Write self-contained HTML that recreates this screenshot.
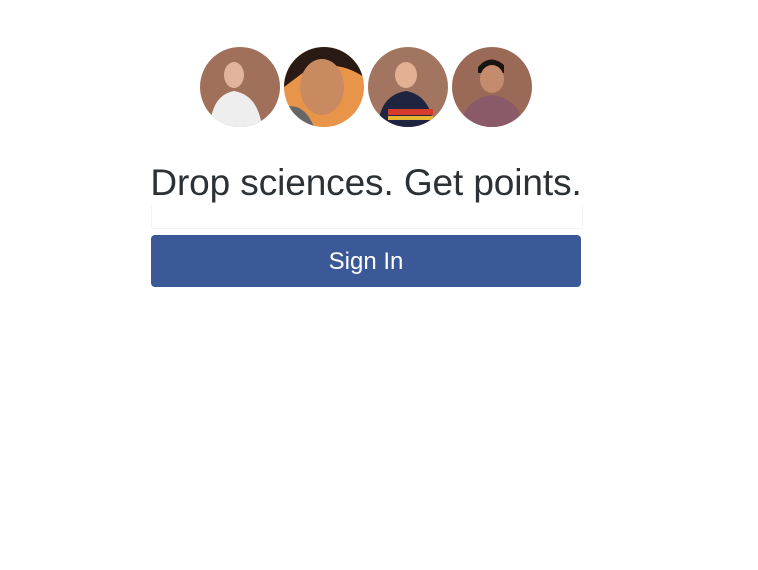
<!DOCTYPE html>
<html><head><style>
body{margin:0;background:#fff;width:758px;height:570px;position:relative;overflow:hidden;font-family:"Liberation Sans",sans-serif}
.av{position:absolute;top:47px;width:80px;height:80px;border-radius:50%;overflow:hidden}
h1{position:absolute;left:149px;top:162px;width:434px;margin:0;font-weight:normal;font-size:37px;color:#2b3135;white-space:nowrap;letter-spacing:-0.1px;text-align:center}
.line{position:absolute;left:151px;top:206px;width:430px;height:22px;border:1px solid #f3f3f3;border-top:none}
.btn{position:absolute;left:151px;top:235px;width:430px;height:52px;background:#3b5897;border-radius:4px;color:#fff;font-size:24px;text-align:center;line-height:54px}
</style></head><body>
<div class="av" style="left:200px;background:#a0705a">
<svg width="80" height="80"><ellipse cx="34" cy="28" rx="10" ry="13" fill="#e0b49c"/><path d="M10 80 Q12 48 34 44 Q58 48 62 80Z" fill="#eeeeee"/></svg></div>
<div class="av" style="left:284px;background:#e8954a">
<svg width="80" height="80"><path d="M0 0H80V30Q50 10 20 25L0 40Z" fill="#2a1a14"/><ellipse cx="38" cy="40" rx="22" ry="28" fill="#c98a62"/><path d="M0 60Q20 55 30 80H0Z" fill="#666"/></svg></div>
<div class="av" style="left:368px;background:#a27560">
<svg width="80" height="80"><ellipse cx="38" cy="28" rx="11" ry="13" fill="#e2b092"/><path d="M10 80 Q12 48 38 44 Q62 48 66 80Z" fill="#1f2440"/><rect x="20" y="62" width="45" height="6" fill="#d63b2c"/><rect x="20" y="69" width="45" height="4" fill="#e8b530"/></svg></div>
<div class="av" style="left:452px;background:#9b6a56">
<svg width="80" height="80"><path d="M26 20Q38 6 52 18L52 26H26Z" fill="#1a1410"/><ellipse cx="40" cy="32" rx="12" ry="14" fill="#c48c6c"/><path d="M8 80 Q12 52 40 48 Q68 52 72 80Z" fill="#8a5a68"/></svg></div>
<h1>Drop sciences. Get points.</h1>
<div class="line"></div>
<div class="btn">Sign In</div>
</body></html>
